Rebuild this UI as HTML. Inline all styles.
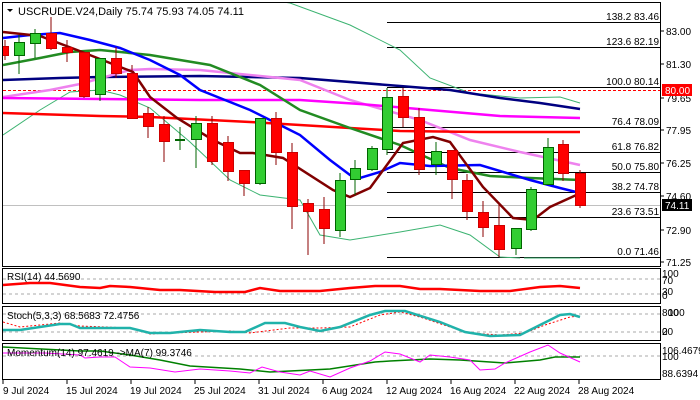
<!DOCTYPE html>
<html><head><meta charset="utf-8"><style>
html,body{margin:0;padding:0;background:#fff;width:700px;height:400px;overflow:hidden}
svg{display:block;font-family:"Liberation Sans",sans-serif;font-size:10px}
</style></head><body>
<svg width="700" height="400" viewBox="0 0 700 400" xmlns="http://www.w3.org/2000/svg">
<rect width="700" height="400" fill="#fff"/>
<defs><clipPath id="m"><rect x="3" y="3" width="657" height="262"/></clipPath></defs>
<g clip-path="url(#m)">
<!-- price line / dashed -->
<line x1="3" y1="205.5" x2="660" y2="205.5" stroke="#c0c0c0"/>
<line x1="3" y1="90.5" x2="660" y2="90.5" stroke="#f00" stroke-dasharray="3,2"/>
<!-- fib -->
<g stroke="#000" stroke-width="1">
<line x1="387" y1="22.5" x2="660" y2="22.5"/><line x1="387" y1="47.5" x2="660" y2="47.5"/>
<line x1="387" y1="87.5" x2="660" y2="87.5"/><line x1="387" y1="127.5" x2="660" y2="127.5"/>
<line x1="387" y1="152.5" x2="660" y2="152.5"/><line x1="387" y1="172.5" x2="660" y2="172.5"/>
<line x1="387" y1="192.5" x2="660" y2="192.5"/><line x1="387" y1="217.5" x2="660" y2="217.5"/>
<line x1="387" y1="257.5" x2="660" y2="257.5"/>
</g>
<g fill="#000" text-anchor="end" font-size="10">
<text x="659" y="20">138.2 83.46</text><text x="659" y="45">123.6 82.19</text>
<text x="659" y="85">100.0 80.14</text><text x="659" y="125">76.4 78.09</text>
<text x="659" y="150">61.8 76.82</text><text x="659" y="170">50.0 75.80</text>
<text x="659" y="190">38.2 74.78</text><text x="659" y="215">23.6 73.51</text>
<text x="659" y="255">0.0 71.46</text>
</g>
<!-- bollinger -->
<g fill="none" stroke="#3cb371" stroke-width="1">
<polyline points="270,0 290,3 350,25 400,50 430,78 470,93 520,98 560,97 580,103"/>
<polyline points="3,135 40,110 70,92 100,90 120,95 150,108 190,142 230,180 260,195 300,200 320,235 350,240 400,232 440,225 470,235 500,257 520,258"/>
<line x1="524" y1="258" x2="580" y2="258"/>
</g>
<g fill="none" stroke-width="2.5">
<polyline stroke="#000080" points="3,80 60,78 100,77 200,76 300,78 400,86 450,90 500,98 540,103 580,109"/>
<polyline stroke="#ee82ee" points="3,97 50,90 80,84 130,70 150,69 200,70 300,80 350,100 420,120 470,140 520,152 580,165"/>
<polyline stroke="#ff00ff" points="3,98 100,99 200,100 300,100 360,104 430,110 500,116 580,118"/>
<polyline stroke="#ff0000" points="3,113 100,116 150,117 250,122 350,128 400,131 480,132 580,132"/>
<polyline stroke="#228b22" points="3,65 40,58 70,52 100,50 150,55 210,65 260,85 300,110 350,128 400,145 450,168 490,176 530,178 580,180"/>
<polyline stroke="#0000ff" points="3,38 30,35 60,33 90,40 120,48 150,60 180,75 200,90 250,110 300,135 330,160 350,175 360,178 380,172 400,163 430,166 480,165 530,180 560,188 580,193"/>
<polyline stroke="#800000" points="3,32 40,36 77,50 133,72 150,97 177,118 213,140 240,153 253,153 283,158 333,190 350,197 370,188 403,143 433,137 450,142 483,187 513,218 533,220 550,207 583,192"/>
</g>
<!-- candles -->
<g id="c"></g>
</g>
<!-- frames -->
<g fill="none" stroke="#000" stroke-width="1">
<rect x="2.5" y="2.5" width="658" height="264"/>
<rect x="2.5" y="268.5" width="658" height="35"/>
<rect x="2.5" y="306.5" width="658" height="34"/>
<rect x="2.5" y="343.5" width="658" height="36"/>
</g>
<text x="18" y="15" font-size="11">USCRUDE.V24,Daily  75.74 75.93 74.05 74.11</text>
<polygon points="7,9 13,9 10,12" fill="#000"/>
<!-- right axis -->
<g fill="#000" font-size="10">
<g stroke="#000"><line x1="661" y1="31" x2="664" y2="31"/><line x1="661" y1="64" x2="664" y2="64"/><line x1="661" y1="98" x2="664" y2="98"/><line x1="661" y1="130" x2="664" y2="130"/><line x1="661" y1="163" x2="664" y2="163"/><line x1="661" y1="196" x2="664" y2="196"/><line x1="661" y1="230" x2="664" y2="230"/><line x1="661" y1="262" x2="664" y2="262"/></g>
<text x="666" y="35">83.00</text><text x="666" y="68">81.30</text><text x="666" y="102">79.65</text>
<text x="666" y="134">77.95</text><text x="666" y="167">76.25</text><text x="666" y="200">74.60</text>
<text x="666" y="234">72.90</text><text x="666" y="266">71.25</text>
<rect x="662" y="84" width="30" height="12" fill="#f00"/><text x="665" y="94" fill="#fff">80.00</text>
<rect x="662" y="199" width="30" height="12" fill="#000"/><text x="665" y="209" fill="#fff">74.11</text>
<text x="662" y="277">100</text><text x="662" y="284">70</text><text x="662" y="295">30</text><text x="662" y="299">0</text>
<text x="662" y="316">800</text><text x="668" y="316">100</text><text x="662" y="335">20</text><text x="662" y="335">0</text>
<text x="662" y="354">106.4679</text><text x="662" y="360">100</text><text x="662" y="377">88.6394</text>
</g>
<!-- RSI -->
<g stroke="#aaa" stroke-dasharray="3,3"><line x1="3" y1="279" x2="660" y2="279"/><line x1="3" y1="294" x2="660" y2="294"/>
<line x1="3" y1="314" x2="660" y2="314"/><line x1="3" y1="332" x2="660" y2="332"/><line x1="3" y1="356" x2="660" y2="356"/></g>
<polyline fill="none" stroke="#f00" stroke-width="2.5" points="3,285 30,283 50,283 80,287 100,288 110,286 130,287 160,290 180,290 215,292 245,292 260,288 280,291 320,291 350,288 375,286 400,286 420,289 440,289 480,291 510,291 540,287 560,286 580,288"/>
<text x="7" y="280" font-size="10">RSI(14) 44.5690</text>
<!-- Stoch -->
<polyline fill="none" stroke="#f00" stroke-dasharray="2,2" points="3,322 20,327 60,323 80,326 130,328 150,334 170,333 230,331 250,333 290,328 320,328 350,327 380,315 400,312 420,317 450,327 470,333 500,335 525,333 545,325 570,317 580,316"/>
<polyline fill="none" stroke="#20b2aa" stroke-width="2.5" points="3,330 20,330 60,324 70,324 80,328 130,328 150,333 170,333 200,330 230,332 245,332 265,323 285,323 300,327 320,331 340,327 370,315 385,311 405,311 440,322 465,332 490,336 520,335 540,325 560,315 570,314 580,317"/>
<text x="7" y="319" font-size="10">Stoch(5,3,3) 68.5683 72.4756</text>
<!-- Momentum -->
<polyline fill="none" stroke="#008000" stroke-width="1.5" points="3,347 80,351 100,351 130,355 160,360 190,366 240,369 270,372 330,369 375,362 390,361 430,359 460,360 490,362 505,363 540,360 555,357 570,357 580,357"/>
<polyline fill="none" stroke="#ff00ff" stroke-width="1" points="3,353 45,353 80,355 85,358 100,357 115,357 130,367 150,368 175,372 200,369 230,371 250,373 262,367 280,372 300,375 310,371 330,377 350,368 370,361 385,352 400,354 420,362 430,355 450,357 470,360 480,370 495,369 505,363 530,352 548,345 560,353 580,362"/>
<text x="7" y="356" font-size="10">Momentum(14) 97.4619  ->MA(7) 99.3746</text>
<!-- dates -->
<g stroke="#000"><line x1="3" y1="380" x2="3" y2="384"/><line x1="67" y1="380" x2="67" y2="384"/><line x1="131" y1="380" x2="131" y2="384"/><line x1="195" y1="380" x2="195" y2="384"/><line x1="259" y1="380" x2="259" y2="384"/><line x1="323" y1="380" x2="323" y2="384"/><line x1="387" y1="380" x2="387" y2="384"/><line x1="451" y1="380" x2="451" y2="384"/><line x1="515" y1="380" x2="515" y2="384"/><line x1="579" y1="380" x2="579" y2="384"/></g>
<g font-size="10" fill="#000">
<text x="3" y="394">9 Jul 2024</text><text x="66" y="394">15 Jul 2024</text><text x="130" y="394">19 Jul 2024</text>
<text x="194" y="394">25 Jul 2024</text><text x="258" y="394">31 Jul 2024</text><text x="322" y="394">6 Aug 2024</text>
<text x="386" y="394">12 Aug 2024</text><text x="450" y="394">16 Aug 2024</text><text x="514" y="394">22 Aug 2024</text>
<text x="578" y="394">28 Aug 2024</text>
</g>
<g clip-path="url(#m)">
<!-- x, bodyTop, bodyBot, wickTop, wickBot, green? -->
<g stroke-width="1">
<line x1="5" y1="40" x2="5" y2="60" stroke="#8b0000"/><rect x="0.5" y="46.5" width="8" height="9" fill="#f00" stroke="#c00"/>
<line x1="19" y1="35" x2="19" y2="74" stroke="#006400"/><rect x="14.5" y="42.5" width="10" height="13" fill="#32cd32" stroke="#006400"/>
<line x1="35" y1="29" x2="35" y2="58" stroke="#006400"/><rect x="30.5" y="33.5" width="10" height="10" fill="#32cd32" stroke="#006400"/>
<line x1="51" y1="17" x2="51" y2="50" stroke="#8b0000"/><rect x="46.5" y="33.5" width="10" height="15" fill="#f00" stroke="#c00"/>
<line x1="67" y1="40" x2="67" y2="62" stroke="#8b0000"/><rect x="62.5" y="47.5" width="10" height="5" fill="#f00" stroke="#c00"/>
<line x1="84" y1="52" x2="84" y2="98" stroke="#8b0000"/><rect x="79.5" y="52.5" width="10" height="44" fill="#f00" stroke="#c00"/>
<line x1="100" y1="58" x2="100" y2="101" stroke="#006400"/><rect x="95.5" y="58.5" width="10" height="36" fill="#32cd32" stroke="#006400"/>
<line x1="116" y1="47" x2="116" y2="78" stroke="#8b0000"/><rect x="111.5" y="58.5" width="10" height="15" fill="#f00" stroke="#c00"/>
<line x1="132" y1="65" x2="132" y2="118" stroke="#8b0000"/><rect x="127.5" y="73.5" width="10" height="45" fill="#f00" stroke="#c00"/>
<line x1="148" y1="107" x2="148" y2="138" stroke="#8b0000"/><rect x="143.5" y="113.5" width="10" height="13" fill="#f00" stroke="#c00"/>
<line x1="164" y1="116" x2="164" y2="162" stroke="#8b0000"/><rect x="159.5" y="124.5" width="10" height="17" fill="#f00" stroke="#c00"/>
<line x1="180" y1="127" x2="180" y2="150" stroke="#006400"/><line x1="175" y1="140" x2="185" y2="140" stroke="#006400" stroke-width="2"/>
<line x1="196" y1="116" x2="196" y2="168" stroke="#006400"/><rect x="191.5" y="123.5" width="10" height="16" fill="#32cd32" stroke="#006400"/>
<line x1="212" y1="116" x2="212" y2="165" stroke="#8b0000"/><rect x="207.5" y="123.5" width="10" height="38" fill="#f00" stroke="#c00"/>
<line x1="228" y1="136" x2="228" y2="181" stroke="#8b0000"/><rect x="223.5" y="142.5" width="10" height="29" fill="#f00" stroke="#c00"/>
<line x1="244" y1="170" x2="244" y2="196" stroke="#8b0000"/><rect x="239.5" y="170.5" width="10" height="13" fill="#f00" stroke="#c00"/>
<line x1="260" y1="118" x2="260" y2="185" stroke="#006400"/><rect x="255.5" y="118.5" width="10" height="65" fill="#32cd32" stroke="#006400"/>
<line x1="276" y1="112" x2="276" y2="165" stroke="#8b0000"/><rect x="271.5" y="118.5" width="10" height="34" fill="#f00" stroke="#c00"/>
<line x1="292" y1="143" x2="292" y2="229" stroke="#8b0000"/><rect x="287.5" y="152.5" width="10" height="54" fill="#f00" stroke="#c00"/>
<line x1="308" y1="199" x2="308" y2="255" stroke="#8b0000"/><rect x="303.5" y="203.5" width="10" height="8" fill="#f00" stroke="#c00"/>
<line x1="324" y1="197" x2="324" y2="244" stroke="#8b0000"/><rect x="319.5" y="209.5" width="10" height="19" fill="#f00" stroke="#c00"/>
<line x1="340" y1="173" x2="340" y2="237" stroke="#006400"/><rect x="335.5" y="180.5" width="10" height="50" fill="#32cd32" stroke="#006400"/>
<line x1="355" y1="160" x2="355" y2="195" stroke="#006400"/><rect x="350.5" y="168.5" width="10" height="11" fill="#32cd32" stroke="#006400"/>
<line x1="372" y1="146" x2="372" y2="171" stroke="#006400"/><rect x="367.5" y="148.5" width="10" height="21" fill="#32cd32" stroke="#006400"/>
<line x1="387" y1="88" x2="387" y2="155" stroke="#006400"/><rect x="382.5" y="97.5" width="10" height="52" fill="#32cd32" stroke="#006400"/>
<line x1="403" y1="88" x2="403" y2="127" stroke="#8b0000"/><rect x="398.5" y="96.5" width="10" height="21" fill="#f00" stroke="#c00"/>
<line x1="419" y1="108" x2="419" y2="175" stroke="#8b0000"/><rect x="414.5" y="117.5" width="10" height="52" fill="#f00" stroke="#c00"/>
<line x1="436" y1="142" x2="436" y2="175" stroke="#006400"/><rect x="431.5" y="151.5" width="10" height="13" fill="#32cd32" stroke="#006400"/>
<line x1="452" y1="150" x2="452" y2="199" stroke="#8b0000"/><rect x="447.5" y="150.5" width="10" height="29" fill="#f00" stroke="#c00"/>
<line x1="467" y1="174" x2="467" y2="220" stroke="#8b0000"/><rect x="462.5" y="180.5" width="10" height="31" fill="#f00" stroke="#c00"/>
<line x1="483" y1="201" x2="483" y2="237" stroke="#8b0000"/><rect x="478.5" y="212.5" width="10" height="15" fill="#f00" stroke="#c00"/>
<line x1="499" y1="203" x2="499" y2="257" stroke="#8b0000"/><rect x="494.5" y="225.5" width="10" height="24" fill="#f00" stroke="#c00"/>
<line x1="516" y1="228" x2="516" y2="255" stroke="#006400"/><rect x="511.5" y="228.5" width="10" height="20" fill="#32cd32" stroke="#006400"/>
<line x1="531" y1="187" x2="531" y2="231" stroke="#006400"/><rect x="526.5" y="189.5" width="10" height="40" fill="#32cd32" stroke="#006400"/>
<line x1="548" y1="138" x2="548" y2="184" stroke="#006400"/><rect x="543.5" y="147.5" width="10" height="37" fill="#32cd32" stroke="#006400"/>
<line x1="563" y1="140" x2="563" y2="181" stroke="#8b0000"/><rect x="558.5" y="144.5" width="10" height="29" fill="#f00" stroke="#c00"/>
<line x1="580" y1="170" x2="580" y2="208" stroke="#8b0000"/><rect x="575.5" y="173.5" width="10" height="32" fill="#f00" stroke="#c00"/>
</g>
</g>
</svg>
</body></html>
